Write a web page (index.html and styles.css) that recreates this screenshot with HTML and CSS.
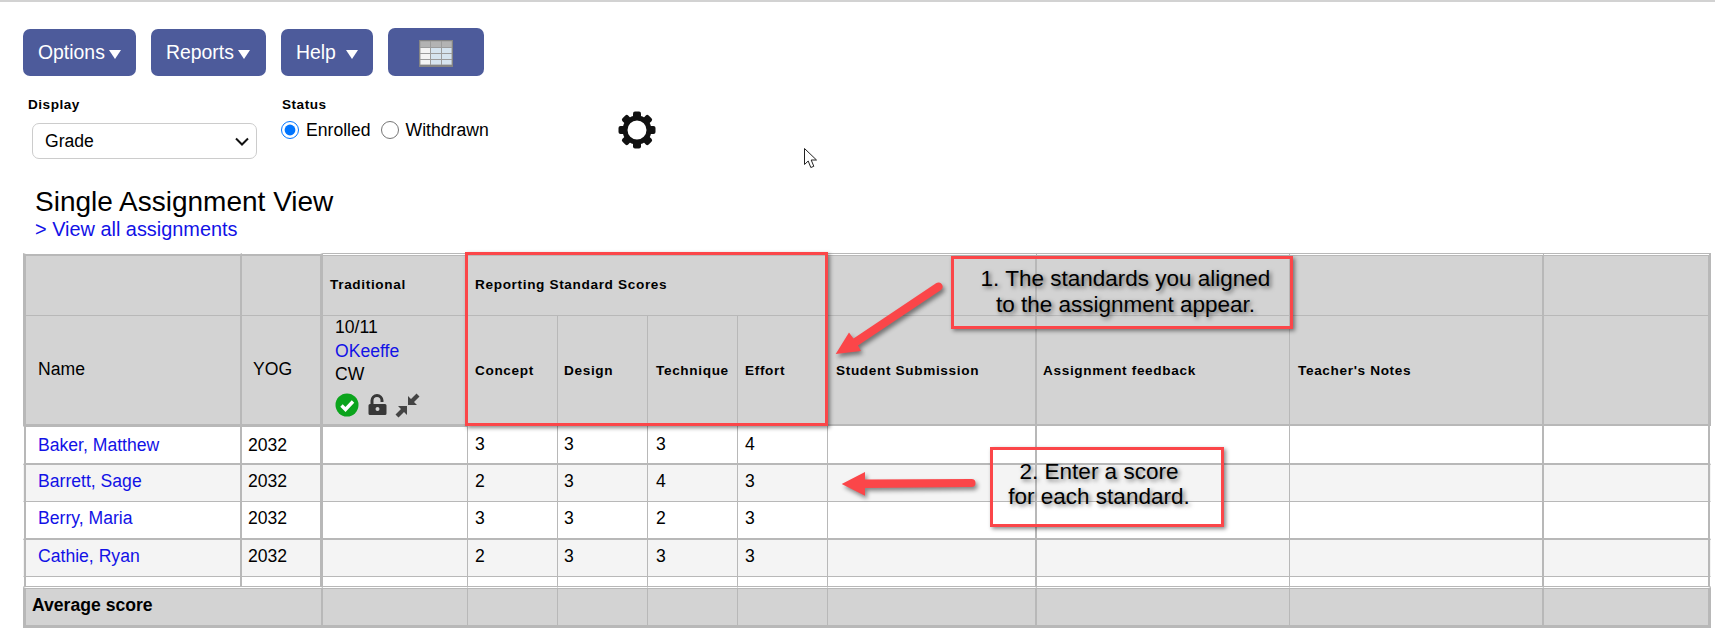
FILE: index.html
```html
<!DOCTYPE html>
<html lang="en">
<head>
<meta charset="utf-8">
<title>Single Assignment View</title>
<link rel="stylesheet" href="styles.css">
</head>
<body>
<div class="page">
  <nav class="toolbar">
    <button class="btn btn-options" type="button">Options<span class="caret"></span></button>
    <button class="btn btn-reports" type="button">Reports<span class="caret"></span></button>
    <button class="btn btn-help" type="button">Help<span class="caret caret-wide"></span></button>
    <button class="btn btn-table" type="button" aria-label="Table view">
      <svg class="table-icon" width="34" height="27" viewBox="0 0 34 27">
        <rect x="0" y="0" width="34" height="27" fill="#858585"/>
        <rect x="1" y="1" width="32" height="24" fill="#9c9c9c"/>
        <g fill="#b3b3b3">
          <rect x="1.500" y="1.500" width="9.500" height="5.500"/><rect x="12" y="1.500" width="10" height="5.500"/><rect x="23" y="1.500" width="9.500" height="5.500"/>
        </g>
        <g fill="#f4f4f4">
          <rect x="1.500" y="8" width="9.500" height="5"/><rect x="1.500" y="14" width="9.500" height="5"/><rect x="1.500" y="20" width="9.500" height="4.500"/>
        </g>
        <g fill="#d6e4ef">
          <rect x="12" y="8" width="10" height="5"/><rect x="23" y="8" width="9.500" height="5"/>
          <rect x="12" y="14" width="10" height="5"/><rect x="23" y="14" width="9.500" height="5"/>
          <rect x="12" y="20" width="10" height="4.500"/><rect x="23" y="20" width="9.500" height="4.500"/>
        </g>
      </svg>
    </button>
  </nav>

  <div class="filters">
    <div class="field field-display">
      <label class="field-label" for="display">Display</label>
      <select class="select" id="display"><option>Grade</option></select>
    </div>
    <div class="field field-status">
      <span class="field-label">Status</span>
      <div class="radios">
        <label class="radio"><input type="radio" name="status" checked>Enrolled</label>
        <label class="radio"><input type="radio" name="status">Withdrawn</label>
      </div>
    </div>
    <svg class="gear" width="40" height="40" viewBox="0 0 40 40">
      <g fill="#111">
        <path fill-rule="evenodd" d="M20 5.500a14.500 14.500 0 1 0 0 29a14.500 14.500 0 1 0 0-29zM20 10.500a9.500 9.500 0 1 1 0 19a9.500 9.500 0 1 1 0-19z"/>
        <rect x="16" y="1.500" width="8" height="7" rx="2"/>
        <rect x="16" y="31.500" width="8" height="7" rx="2"/>
        <rect x="1.500" y="16" width="7" height="8" rx="2"/>
        <rect x="31.500" y="16" width="7" height="8" rx="2"/>
        <rect x="16" y="1.500" width="8" height="7" rx="2" transform="rotate(45 20 20)"/>
        <rect x="16" y="1.500" width="8" height="7" rx="2" transform="rotate(135 20 20)"/>
        <rect x="16" y="1.500" width="8" height="7" rx="2" transform="rotate(225 20 20)"/>
        <rect x="16" y="1.500" width="8" height="7" rx="2" transform="rotate(315 20 20)"/>
      </g>
    </svg>
  </div>

  <h1 class="title">Single Assignment View</h1>
  <a class="link view-all" href="#">&gt; View all assignments</a>

  <table class="grid">
    <colgroup>
      <col class="w-name"><col class="w-yog"><col class="w-trad"><col class="w-std"><col class="w-std"><col class="w-std"><col class="w-std"><col class="w-sub"><col class="w-fb"><col class="w-notes"><col class="w-last">
    </colgroup>
    <thead>
      <tr class="row-group">
        <th class="name frozen"></th>
        <th class="yog frozen"></th>
        <th class="trad label">Traditional</th>
        <th class="label" colspan="4">Reporting Standard Scores</th>
        <th class="sub"></th>
        <th class="fb"></th>
        <th class="notes"></th>
        <th class="last"></th>
      </tr>
      <tr class="row-cols">
        <th class="name plain">Name</th>
        <th class="yog plain">YOG</th>
        <th class="trad assignment">
          <div>10/11</div>
          <div><a class="link" href="#">OKeeffe</a></div>
          <div>CW</div>
          <div class="assignment-icons">
            <svg width="24" height="24" viewBox="0 0 24 24"><circle cx="12" cy="12" r="11.500" fill="#0ba41c"/><path d="M6.500 12.500l4 4l7.500-8" fill="none" stroke="#fff" stroke-width="3.400"/></svg>
            <svg width="20" height="22" viewBox="0 0 20 22"><path d="M4 10V6.500a5 5 0 0 1 10 0V8" fill="none" stroke="#383838" stroke-width="3"/><path fill="#383838" fill-rule="evenodd" d="M2 10h15a1.500 1.500 0 0 1 1.500 1.500v8A1.500 1.500 0 0 1 17 21H2a1.500 1.500 0 0 1-1.500-1.500v-8A1.500 1.500 0 0 1 2 10zM9.500 13a2 2 0 1 0 0 4a2 2 0 1 0 0-4z"/></svg>
            <svg class="icon-collapse" width="25" height="25" viewBox="0 0 25 25" fill="#444"><path d="M13 12V3l3 3l5.500-5.500l3 3L19 9l3 3z"/><path d="M12 13v9l-3-3l-5.500 5.500l-3-3L6 16l-3-3z"/></svg>
          </div>
        </th>
        <th class="label p-concept">Concept</th>
        <th class="label p-design">Design</th>
        <th class="label p-tech">Technique</th>
        <th class="label p-effort">Effort</th>
        <th class="sub label p-sub">Student Submission</th>
        <th class="fb label p-fb">Assignment feedback</th>
        <th class="notes label p-notes">Teacher's Notes</th>
        <th class="last"></th>
      </tr>
    </thead>
    <tbody>
      <tr class="r1">
        <td class="name"><a class="link" href="#">Baker, Matthew</a></td><td class="yog">2032</td><td class="trad"></td>
        <td class="p-concept">3</td><td class="p-design">3</td><td class="p-tech">3</td><td class="p-effort">4</td>
        <td class="sub"></td><td class="fb"></td><td class="notes"></td><td class="last"></td>
      </tr>
      <tr class="r2">
        <td class="name"><a class="link" href="#">Barrett, Sage</a></td><td class="yog">2032</td><td class="trad"></td>
        <td class="p-concept">2</td><td class="p-design">3</td><td class="p-tech">4</td><td class="p-effort">3</td>
        <td class="sub"></td><td class="fb"></td><td class="notes"></td><td class="last"></td>
      </tr>
      <tr class="r3">
        <td class="name"><a class="link" href="#">Berry, Maria</a></td><td class="yog">2032</td><td class="trad"></td>
        <td class="p-concept">3</td><td class="p-design">3</td><td class="p-tech">2</td><td class="p-effort">3</td>
        <td class="sub"></td><td class="fb"></td><td class="notes"></td><td class="last"></td>
      </tr>
      <tr class="r4">
        <td class="name"><a class="link" href="#">Cathie, Ryan</a></td><td class="yog">2032</td><td class="trad"></td>
        <td class="p-concept">2</td><td class="p-design">3</td><td class="p-tech">3</td><td class="p-effort">3</td>
        <td class="sub"></td><td class="fb"></td><td class="notes"></td><td class="last"></td>
      </tr>
      <tr class="r5">
        <td class="name"></td><td class="yog"></td><td class="trad"></td>
        <td></td><td></td><td></td><td></td>
        <td class="sub"></td><td class="fb"></td><td class="notes"></td><td class="last"></td>
      </tr>
    </tbody>
    <tfoot>
      <tr>
        <td class="name avg" colspan="2">Average score</td><td class="trad"></td>
        <td></td><td></td><td></td><td></td>
        <td class="sub"></td><td class="fb"></td><td class="notes"></td><td class="last"></td>
      </tr>
    </tfoot>
  </table>

  <div class="callout box-standards"></div>
  <div class="callout box-note-1">1. The standards you aligned<br>to the assignment appear.</div>
  <div class="callout box-note-2">2. Enter a score<br>for each standard.</div>
  <svg class="arrow arrow-1" width="125" height="90" viewBox="825 275 125 90"><path fill="#fb4649" d="M835.700 354L849 332.500L853.500 338.500L936 283.300A4 4 0 0 1 941 290L858 345.500L861 351z"/></svg>
  <svg class="arrow arrow-2" width="150" height="40" viewBox="835 465 150 40"><path fill="#fb4649" d="M841.700 484L865 472V479.500L971.500 479A4 4 0 0 1 971.500 487L865 488V495.700z"/></svg>
  <svg class="cursor" width="14" height="21" viewBox="0 0 14 21"><path d="M.5.500V16.500L4.200 13L6.800 19.500L9.800 18.300L7.200 12H12.500z" fill="#fff" stroke="#222" stroke-width="1"/></svg>
</div>
</body>
</html>
```

FILE: styles.css
```css
* { box-sizing: border-box; }

html, body { margin: 0; padding: 0; background: #fff; }

body {
  font-family: "Liberation Sans", Arial, sans-serif;
  font-size: 17.6px;
  color: #000;
}

.page {
  position: relative;
  width: 1715px;
  height: 633px;
  overflow: hidden;
  border-top: 2px solid #d2d2d2;
}

/* Toolbar */
.toolbar {
  display: flex;
  align-items: flex-end;
  gap: 15px;
  padding: 26px 0 0 23px;
}

.btn {
  display: flex;
  align-items: center;
  height: 47px;
  padding: 0 0 0 15px;
  border: 0;
  border-radius: 7px;
  background: #4d5b9b;
  color: #fff;
  font-family: inherit;
  font-size: 19.4px;
}
.btn-options { width: 113px; }
.btn-reports { width: 115px; }
.btn-help { width: 92px; }
.btn-table { width: 96px; height: 48px; padding: 0 0 0 31px; }

.caret {
  width: 0;
  height: 0;
  margin: 3px 0 0 4px;
  border-left: 6.500px solid transparent;
  border-right: 6.500px solid transparent;
  border-top: 9px solid #fff;
}
.caret-wide { margin-left: 10px; }
.table-icon { display: block; margin-top: 2px; }

/* Filters */
.filters {
  display: flex;
  align-items: flex-start;
  padding: 21px 0 0 28px;
}
.field-label {
  display: block;
  font-size: 13.6px;
  font-weight: 700;
  line-height: 16px;
  letter-spacing: 0.5px;
}
.field-display { width: 254px; }
.select {
  display: block;
  width: 225px;
  height: 36px;
  margin: 10px 0 0 4px;
  padding: 0 0 0 12px;
  border: 1px solid #ccc;
  border-radius: 7px;
  background: #fff url("data:image/svg+xml,%3Csvg xmlns='http://www.w3.org/2000/svg' width='14' height='9' viewBox='0 0 14 9'%3E%3Cpath d='M1 1.500l6 6l6-6' fill='none' stroke='%23111' stroke-width='2'/%3E%3C/svg%3E") no-repeat right 7px center;
  color: #000;
  font-family: inherit;
  font-size: 17.6px;
  appearance: none;
}
.radios { display: flex; gap: 10px; margin: 5px 0 0 -1px; }
.radio { display: flex; align-items: center; gap: 7px; line-height: 24px; }
.radio input { width: 18px; height: 18px; margin: 0; accent-color: #0075ff; }
.gear { margin: 13px 0 0 128px; filter: blur(.5px); }

/* Title */
.title {
  margin: 28px 0 0 35px;
  font-size: 28px;
  font-weight: 400;
  line-height: 30px;
}
.link { color: #1212e6; text-decoration: none; }
.view-all { display: block; margin-left: 35px; font-size: 19.900px; line-height: 24px; }

/* Table */
.grid {
  width: 1688px;
  margin: 12px 0 0 23px;
  border-collapse: separate;
  border-spacing: 0;
  table-layout: fixed;
}
.w-name { width: 219px; }
.w-yog { width: 81px; }
.w-trad { width: 145px; }
.w-std { width: 90px; }
.w-sub { width: 209px; }
.w-fb { width: 253px; }
.w-notes { width: 254px; }
.w-last { width: 167px; }

.grid th, .grid td {
  padding: 0 0 0 7px;
  border-right: 1px solid #b8b8b8;
  border-bottom: 1px solid #b8b8b8;
  background-clip: padding-box;
  text-align: left;
  font-weight: 400;
  white-space: nowrap;
}
.grid thead th, .grid tfoot td { background-color: #d3d3d3; }
.grid .name { border-right-width: 2px; }
.grid .yog { border-right-width: 3px; }
.grid .sub, .grid .notes { border-right-width: 2px; }

/* Outer edges of the header and footer */
.grid .last { border-right-width: 3px; }
.grid thead .name, .grid tfoot .name { border-left: 3px solid #b8b8b8; }

.row-group th { height: 63px; padding-bottom: 2px; border-top: 3px double #b8b8b8; }
.row-group th.frozen { border-top: 1px solid transparent; box-shadow: inset 0 2px 0 #b8b8b8; }
.row-cols th { height: 110px; border-bottom-width: 2px; }

.grid th.label {
  font-size: 13.600px;
  font-weight: 700;
  letter-spacing: 0.65px;
}
.grid .row-cols .name { padding-left: 12px; padding-bottom: 2px; }
.grid .row-cols .yog { padding-left: 11px; padding-bottom: 2px; }
.grid .row-cols .assignment {
  padding-left: 12px;
  vertical-align: top;
  line-height: 23.600px;
}
.assignment-icons { display: flex; align-items: center; gap: 9px; margin-top: 6px; }
.assignment-icons svg { display: block; }
.assignment-icons .icon-collapse { margin-left: -2px; }

.grid .p-design { padding-left: 6px; }
.grid .p-tech { padding-left: 8px; }
.grid .p-sub { padding-left: 8px; }
.grid .p-fb { padding-left: 6px; }
.grid .p-notes { padding-left: 8px; }

/* Body rows */
.grid tbody td { padding-bottom: 3px; }
.grid tbody .name { border-left: 1px solid transparent; box-shadow: inset 2px 0 0 #b8b8b8; padding-left: 14px; }
.grid tbody .yog { padding-left: 6px; }
.grid tbody .last { border-right: 1px solid transparent; box-shadow: inset -2px 0 0 #b8b8b8; }
.grid .r1 td { height: 39px; padding-bottom: 0; border-bottom-width: 2px; }
.grid .r2 td { height: 37px; background: #f4f4f4; }
.grid .r3 td { height: 38px; border-bottom-width: 2px; }
.grid .r4 td { height: 37px; background: #f4f4f4; }
.grid .r5 td { height: 10px; padding-bottom: 0; }
.r1 .name, .r1 .yog, .r1 .trad { border-top: 1px solid #b8b8b8; }

/* Footer */
.grid tfoot td {
  height: 41px;
  padding-bottom: 2px;
  border-top: 1px solid #fff;
  border-bottom: 3px solid #b8b8b8;
  box-shadow: inset 0 1px 0 #b8b8b8;
}
.grid tfoot .avg {
  padding-left: 6px;
  font-weight: 700;
}

/* Annotations laid over the screenshot */
.callout {
  position: absolute;
  border: 3px solid #fb4649;
  box-shadow: 2px 2px 4px rgba(0, 0, 0, .45);
  color: #000;
  font-size: 22.500px;
  line-height: 26px;
  text-align: center;
  text-shadow: 2px 2px 4px rgba(0, 0, 0, .55);
}
.box-standards { left: 465px; top: 250px; width: 363px; height: 174px; }
.box-note-1 { left: 951px; top: 254px; width: 342px; height: 73px; padding: 7px 0 0 7px; }
.box-note-2 { left: 990px; top: 445px; width: 234px; height: 80px; padding: 9px 16px 0 0; line-height: 25px; }

.arrow { position: absolute; filter: drop-shadow(2px 3px 2px rgba(0, 0, 0, .45)); }
.arrow-1 { left: 825px; top: 273px; }
.arrow-2 { left: 835px; top: 463px; }
.cursor { position: absolute; left: 804px; top: 146px; }
```
